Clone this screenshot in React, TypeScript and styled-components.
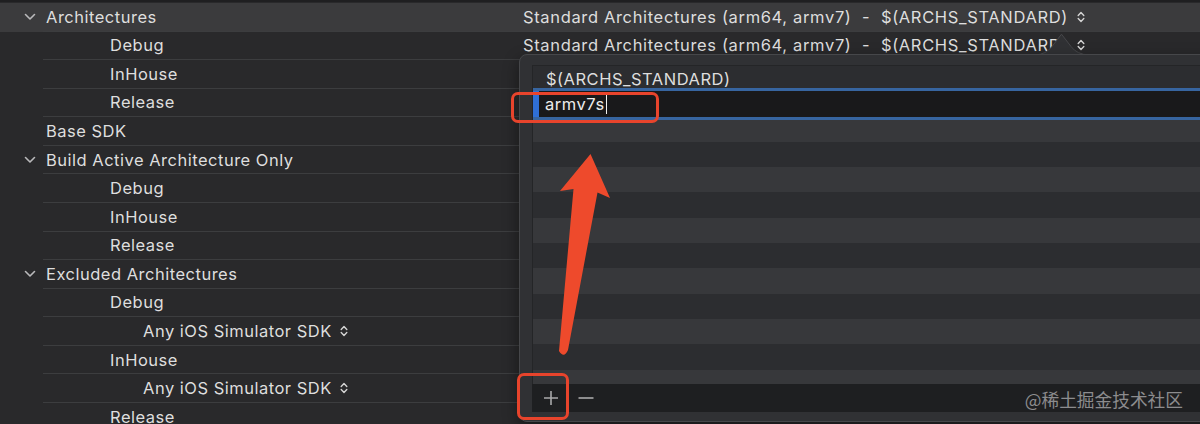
import React from 'react';
import styled, { createGlobalStyle } from 'styled-components';

const GlobalStyle = createGlobalStyle`
  html, body {
    margin: 0;
    padding: 0;
    background: #29292b;
  }
  body {
    font-family: Inter, "Liberation Sans", sans-serif;
    overflow: hidden;
  }
`;

const Screen = styled.div`
  position: relative;
  width: 1200px;
  height: 424px;
  overflow: hidden;
  background: #29292b;
  border-top: 2px solid #1f1f21;
  padding-top: 1px;
  box-sizing: border-box;
  color: #dedede;
`;

const SettingsList = styled.div`
  display: flex;
  flex-direction: column;
`;

const Row = styled.div<{ $header?: boolean }>`
  display: flex;
  height: 28.57px;
  background: ${(p) => (p.$header ? '#3b3b3d' : 'transparent')};
`;

const Gutter = styled.div`
  width: 43px;
  flex: none;
  display: flex;
  align-items: center;
  justify-content: flex-end;
  padding-right: 7px;
  box-sizing: border-box;
`;

const Cells = styled.div`
  flex: 1;
  display: grid;
  grid-template-columns: 480px 1fr;
  align-items: center;
  border-bottom: 1px solid #3c3d3f;
  box-sizing: border-box;
`;

const Label = styled.div<{ $level: number }>`
  padding-left: ${(p) => [3, 67, 100][p.$level]}px;
  font-size: 16.5px;
  letter-spacing: 0.5px;
  white-space: nowrap;
  display: flex;
  align-items: center;
  gap: 8px;
`;

const Value = styled.div`
  font-size: 16.5px;
  letter-spacing: 0.65px;
  white-space: pre;
  display: flex;
  align-items: center;
  gap: 9px;
`;

const Popover = styled.div`
  position: absolute;
  left: 519px;
  top: 52px;
  width: 720px;
  height: 368px;
  background: #303134;
  border: 1px solid #46474a;
  border-radius: 8px;
  padding: 10px 0 9px 12px;
  box-sizing: border-box;
  display: flex;
  flex-direction: column;
  box-shadow: 0 6px 16px rgba(0, 0, 0, 0.45);
`;

const PopCaret = styled.svg`
  position: absolute;
  left: 1035px;
  top: 31px;
`;

const ValueList = styled.div`
  flex: 1;
  display: flex;
  flex-direction: column;
  overflow: hidden;
  border-left: 1px solid #242527;
  border-top: 1px solid #242527;
`;

const ListRow = styled.div<{ $odd?: boolean }>`
  flex: none;
  height: 25.3px;
  display: flex;
  align-items: center;
  padding-left: 13px;
  font-size: 16.5px;
  letter-spacing: 0.5px;
  color: #dedede;
  background: ${(p) => (p.$odd ? '#37383b' : '#2c2d30')};
`;

const EditRow = styled.div`
  flex: none;
  height: 31.3px;
  margin: -3px 0;
  position: relative;
  z-index: 1;
  display: flex;
  border-top: 3px solid #3765a0;
  border-bottom: 3px solid #3765a0;
  box-sizing: border-box;
`;

const FocusBar = styled.div`
  width: 6px;
  background: #2f6fd6;
`;

const EditField = styled.div`
  flex: 1;
  background: #19191b;
  display: flex;
  align-items: center;
  padding-left: 6px;
  font-size: 16.5px;
  letter-spacing: 0.5px;
  color: #ececec;
`;

const Cursor = styled.span`
  display: inline-block;
  width: 1.5px;
  height: 20px;
  margin-left: 1px;
  background: #f2f2f2;
`;

const Toolbar = styled.div`
  flex: none;
  height: 28px;
  background: #1e1f21;
  display: flex;
  align-items: center;
  gap: 19px;
  padding-left: 11px;
`;

const Watermark = styled.div`
  position: absolute;
  right: 17px;
  top: 384px;
  font-family: "Noto Sans CJK SC", sans-serif;
  font-size: 17.7px;
  color: #8c8c8e;
`;

const Callout = styled.div<{ $l: number; $t: number; $w: number; $h: number }>`
  position: absolute;
  z-index: 2;
  left: ${(p) => p.$l}px;
  top: ${(p) => p.$t}px;
  width: ${(p) => p.$w}px;
  height: ${(p) => p.$h}px;
  border: 3px solid #e8442c;
  border-radius: 7px;
  box-sizing: border-box;
`;

const Overlay = styled.svg`
  position: absolute;
  z-index: 2;
  left: 0;
  top: 0;
  pointer-events: none;
`;

const Disclosure = () => (
  <svg width="12" height="8" viewBox="0 0 12 8">
    <polyline points="1.5,1.5 6,6 10.5,1.5" fill="none" stroke="#b9b9bb" strokeWidth="1.6" strokeLinecap="round" strokeLinejoin="round" />
  </svg>
);

const UpDown = () => (
  <svg width="8" height="12" viewBox="0 0 8 12">
    <polyline points="1.2,4.5 4,1.6 6.8,4.5" fill="none" stroke="#d4d4d4" strokeWidth="1.4" strokeLinecap="round" strokeLinejoin="round" />
    <polyline points="1.2,7.5 4,10.4 6.8,7.5" fill="none" stroke="#d4d4d4" strokeWidth="1.4" strokeLinecap="round" strokeLinejoin="round" />
  </svg>
);

interface Setting {
  label: string;
  level: number;
  expanded?: boolean;
  header?: boolean;
  value?: string;
  popup?: boolean;
}

const ARCH_VALUE = 'Standard Architectures (arm64, armv7)  -  $(ARCHS_STANDARD)';

const settings: Setting[] = [
  { label: 'Architectures', level: 0, expanded: true, header: true, value: ARCH_VALUE },
  { label: 'Debug', level: 1, value: ARCH_VALUE },
  { label: 'InHouse', level: 1 },
  { label: 'Release', level: 1 },
  { label: 'Base SDK', level: 0 },
  { label: 'Build Active Architecture Only', level: 0, expanded: true },
  { label: 'Debug', level: 1 },
  { label: 'InHouse', level: 1 },
  { label: 'Release', level: 1 },
  { label: 'Excluded Architectures', level: 0, expanded: true },
  { label: 'Debug', level: 1 },
  { label: 'Any iOS Simulator SDK', level: 2, popup: true },
  { label: 'InHouse', level: 1 },
  { label: 'Any iOS Simulator SDK', level: 2, popup: true },
  { label: 'Release', level: 1 },
];

export default function App() {
  return (
    <>
      <GlobalStyle />
      <Screen>
        <SettingsList>
          {settings.map((s, i) => (
            <Row key={i} $header={s.header}>
              <Gutter>{s.expanded && <Disclosure />}</Gutter>
              <Cells>
                <Label $level={s.level}>
                  {s.label}
                  {s.popup && <UpDown />}
                </Label>
                {s.value && (
                  <Value>
                    {s.value}
                    <UpDown />
                  </Value>
                )}
              </Cells>
            </Row>
          ))}
        </SettingsList>

        <PopCaret width="54" height="23" viewBox="0 0 54 23">
          <path d="M0 22 Q11 21.5 17 13.5 L26.5 1.2 L36 13.5 Q42 21.5 54 22 L54 23 L0 23 Z" fill="#303134" />
          <path d="M0 22 Q11 21.5 17 13.5 L26.5 1.2 L36 13.5 Q42 21.5 54 22" fill="none" stroke="#46474a" strokeWidth="1" />
        </PopCaret>

        <Popover>
          <ValueList>
            <ListRow>$(ARCHS_STANDARD)</ListRow>
            <EditRow>
              <FocusBar />
              <EditField>
                armv7s
                <Cursor />
              </EditField>
            </EditRow>
            {Array.from({ length: 12 }).map((_, i) => (
              <ListRow key={i} $odd={i % 2 === 0} />
            ))}
          </ValueList>
          <Toolbar>
            <svg width="16" height="16" viewBox="0 0 16 16">
              <path d="M8 1 V15 M1 8 H15" stroke="#a9a9ab" strokeWidth="1.6" />
            </svg>
            <svg width="16" height="16" viewBox="0 0 16 16">
              <path d="M0.5 8 H15.5" stroke="#a9a9ab" strokeWidth="1.6" />
            </svg>
          </Toolbar>
        </Popover>

        <Watermark>@稀土掘金技术社区</Watermark>

        <Callout $l={511} $t={90} $w={148} $h={31} />
        <Callout $l={517} $t={371} $w={52} $h={47} />

        <Overlay width="1200" height="424" viewBox="0 0 1200 424">
          <path
            d="M590.5 152 L610 196 L597.5 190.5 L568 348 Q564 357 559 349 L573.5 187 L560 189 Z"
            fill="#ee4a2c"
          />
        </Overlay>
      </Screen>
    </>
  );
}
